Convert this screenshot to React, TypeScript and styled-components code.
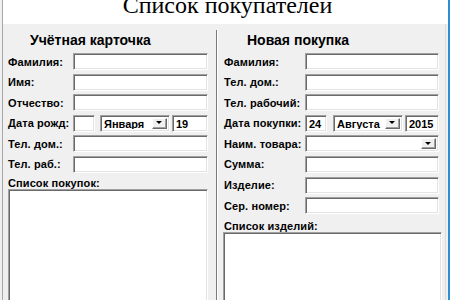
import React from 'react';
import styled, { createGlobalStyle } from 'styled-components';

const GlobalStyle = createGlobalStyle`
  html, body {
    margin: 0;
    padding: 0;
    background: #f0f0f0;
  }
`;

const Window = styled.div`
  width: 450px;
  height: 300px;
  box-sizing: border-box;
  overflow: hidden;
  background: #f0f0f0;
  border-right: 2px solid #2b8fd6;
  padding-left: 2px;
  font-family: "Liberation Sans", Arial, sans-serif;
  color: #000;
`;

const Frame = styled.div`
  height: 100%;
  border-left: 1px solid #a8a8a8;
  border-right: 1px solid #dcdcdc;
  margin-right: 2px;
  display: flex;
  flex-direction: column;
`;

const TitleBar = styled.div`
  height: 24px;
  flex: none;
  background: #fff;
  overflow: hidden;
  text-align: center;
  margin-right: -3px;
`;

const Title = styled.div`
  font-family: "Liberation Serif", "Times New Roman", serif;
  font-size: 24px;
  line-height: 24px;
  margin-top: -7px;
  padding-left: 4px;
`;

const Body = styled.div`
  flex: 1;
  display: flex;
  min-height: 0;
`;

const Panel = styled.div<{ $w: number; $pad: number }>`
  width: ${p => p.$w}px;
  flex: none;
  padding-left: ${p => p.$pad}px;
  box-sizing: border-box;
  display: flex;
  flex-direction: column;
`;

const Divider = styled.div`
  width: 1px;
  flex: none;
  margin-top: 6px;
  background: #7a7a7a;
  border-right: 1px solid #fff;
`;

const Heading = styled.div<{ $indent: number }>`
  font-size: 14px;
  font-weight: 700;
  line-height: 16px;
  margin: 8px 0 5px ${p => p.$indent}px;
  white-space: nowrap;
`;

const Form = styled.div<{ $label: number; $field: number }>`
  display: grid;
  grid-template-columns: ${p => p.$label}px ${p => p.$field}px;
  grid-auto-rows: 17px;
  row-gap: 3.6px;
  align-items: center;
`;

const Label = styled.div`
  font-size: 11px;
  font-weight: 700;
  line-height: 12px;
  white-space: nowrap;
  letter-spacing: 0.1px;
`;

const sunken = `
  box-sizing: border-box;
  background: #fff;
  border: 1px solid;
  border-color: #a0a0a0 #fff #fff #a0a0a0;
  box-shadow: inset 1px 1px #6a6a6a, inset -1px -1px #e3e3e3;
`;

const Field = styled.div<{ $w?: number }>`
  ${sunken}
  height: 17px;
  width: ${p => (p.$w ? `${p.$w}px` : '100%')};
  flex: none;
  padding: 2px 0 0 3px;
  font-size: 11px;
  font-weight: 700;
  line-height: 12px;
  overflow: hidden;
`;

const DateRow = styled.div<{ $gap: number }>`
  display: flex;
  height: 17px;
  & > :first-child {
    margin-right: ${p => p.$gap}px;
  }
  & > :nth-child(2) {
    margin-right: 2px;
  }
`;

const Combo = styled.div<{ $w?: number }>`
  ${sunken}
  height: 17px;
  width: ${p => (p.$w ? `${p.$w}px` : '100%')};
  flex: none;
  display: flex;
  align-items: stretch;
  padding: 2px;
  font-size: 11px;
  font-weight: 700;
  line-height: 12px;
`;

const ComboText = styled.div`
  flex: 1;
  padding: 0 0 0 1px;
  overflow: hidden;
`;

const DropButton = styled.div`
  width: 15px;
  flex: none;
  box-sizing: border-box;
  background: #f0f0f0;
  border: 1px solid;
  border-color: #fff #696969 #696969 #fff;
  box-shadow: inset -1px -1px #a0a0a0;
  display: flex;
  align-items: center;
  justify-content: center;
  &::after {
    content: '';
    border-left: 3px solid transparent;
    border-right: 3px solid transparent;
    border-top: 3px solid #000;
    margin: 0 1px 1px 0;
  }
`;

const ListLabel = styled(Label)<{ $top: number }>`
  margin-top: ${p => p.$top}px;
`;

const ListBox = styled.div<{ $w: number; $shift?: number }>`
  ${sunken}
  width: ${p => p.$w}px;
  margin-left: ${p => p.$shift || 0}px;
  flex: 1;
  margin-bottom: -4px;
`;

function DateField({ day, month, year, gap, yearW }: { day: string; month: string; year: string; gap: number; yearW: number }) {
  return (
    <DateRow $gap={gap}>
      <Field $w={22}>{day}</Field>
      <Combo $w={70}>
        <ComboText>{month}</ComboText>
        <DropButton />
      </Combo>
      <Field $w={yearW}>{year}</Field>
    </DateRow>
  );
}

export default function App() {
  return (
    <Window>
      <GlobalStyle />
      <Frame>
        <TitleBar>
          <Title>Список покупателей</Title>
        </TitleBar>
        <Body>
          <Panel $w={213} $pad={5}>
            <Heading $indent={22}>Учётная карточка</Heading>
            <Form $label={65} $field={135}>
              <Label>Фамилия:</Label>
              <Field />
              <Label>Имя:</Label>
              <Field />
              <Label>Отчество:</Label>
              <Field />
              <Label>Дата рожд:</Label>
              <DateField day="" month="Января" year="19" gap={5} yearW={36} />
              <Label>Тел. дом.:</Label>
              <Field />
              <Label>Тел. раб.:</Label>
              <Field />
            </Form>
            <ListLabel $top={4.5}>Список покупок:</ListLabel>
            <ListBox $w={200} />
          </Panel>
          <Divider />
          <Panel $w={226} $pad={6}>
            <Heading $indent={23}>Новая покупка</Heading>
            <Form $label={81} $field={134}>
              <Label>Фамилия:</Label>
              <Field />
              <Label>Тел. дом.:</Label>
              <Field />
              <Label>Тел. рабочий:</Label>
              <Field />
              <Label>Дата покупки:</Label>
              <DateField day="24" month="Августа" year="2015" gap={6} yearW={34} />
              <Label>Наим. товара:</Label>
              <Combo>
                <ComboText />
                <DropButton />
              </Combo>
              <Label>Сумма:</Label>
              <Field />
              <Label>Изделие:</Label>
              <Field />
              <Label>Сер. номер:</Label>
              <Field />
            </Form>
            <ListLabel $top={6}>Список изделий:</ListLabel>
            <ListBox $w={219} $shift={-1} />
          </Panel>
        </Body>
      </Frame>
    </Window>
  );
}
